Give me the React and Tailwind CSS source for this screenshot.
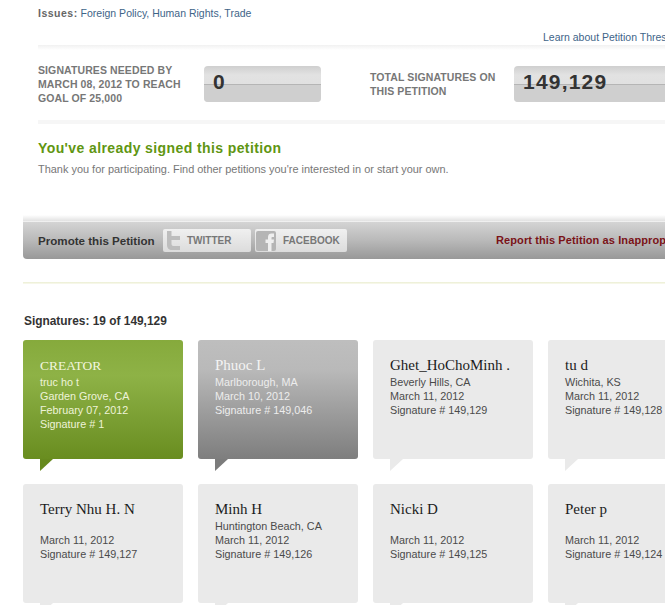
import React from 'react';

const signers = [
  { title: 'CREATOR', lines: ['truc ho t', 'Garden Grove, CA', 'February 07, 2012', 'Signature # 1'], kind: 'creator' },
  { title: 'Phuoc L', lines: ['Marlborough, MA', 'March 10, 2012', 'Signature # 149,046'], kind: 'recent' },
  { title: 'Ghet_HoChoMinh .', lines: ['Beverly Hills, CA', 'March 11, 2012', 'Signature # 149,129'] },
  { title: 'tu d', lines: ['Wichita, KS', 'March 11, 2012', 'Signature # 149,128'] },
  { title: 'Terry Nhu H. N', lines: ['\u00a0', 'March 11, 2012', 'Signature # 149,127'] },
  { title: 'Minh H', lines: ['Huntington Beach, CA', 'March 11, 2012', 'Signature # 149,126'] },
  { title: 'Nicki D', lines: ['\u00a0', 'March 11, 2012', 'Signature # 149,125'] },
  { title: 'Peter p', lines: ['\u00a0', 'March 11, 2012', 'Signature # 149,124'] },
];

const cardStyles = {
  creator: {
    box: 'bg-gradient-to-b from-[#86aa3c] via-[#8eb246] via-30% to-[#698d1f]',
    title: 'text-[13.5px] text-[#f2f6de]',
    text: 'text-[#eef3d8]',
    tail: 'bg-[#678a1e]',
  },
  recent: {
    box: 'bg-gradient-to-b from-[#bebebe] via-[#b9b9b9] via-25% to-[#7e7e7e]',
    title: 'text-[15px] text-[#f4f4f4]',
    text: 'text-[#ededed]',
    tail: 'bg-[#7c7c7c]',
  },
  plain: {
    box: 'bg-[#eaeaea]',
    title: 'text-[15px] text-[#1c1c1c]',
    text: 'text-[#4a4a4a]',
    tail: 'bg-[#eaeaea]',
  },
};

function SignatureCard({ signer }) {
  const s = cardStyles[signer.kind || 'plain'];
  return (
    <div className={`relative w-[160px] h-[119px] rounded-[3px] pl-[17px] pt-[16px] ${s.box}`}>
      <div className={`font-['Liberation_Serif',serif] leading-[19px] ${s.title}`}>{signer.title}</div>
      <div className={`text-[10.8px] leading-[14px] ${s.text}`}>
        {signer.lines.map((line, i) => (
          <div key={i} className="whitespace-nowrap">{line}</div>
        ))}
      </div>
      <div className={`absolute left-[17px] top-full w-[13px] h-[12px] [clip-path:polygon(0_0,100%_0,0_100%)] ${s.tail}`} />
    </div>
  );
}

function Counter({ value, className }) {
  return (
    <div className={`relative shrink-0 h-[36px] rounded-[4px] bg-gradient-to-b from-[#cfcfcf] via-[#e2e2e2] via-25% to-[#dedede] overflow-hidden ${className}`}>
      <div className="absolute inset-x-0 top-[18px] bottom-0 bg-[#cfcfcf] border-t border-[#b5b5b5]" />
      <div className="relative text-[21px] leading-[32px] font-bold text-[#333] tracking-[1.2px]">{value}</div>
    </div>
  );
}

function ShareButton({ icon, label, className }) {
  return (
    <div className={`flex items-center shrink-0 h-[23px] rounded-[2px] bg-gradient-to-b from-[#f0f0f0] to-[#dcdcdc] ${className}`}>
      {icon}
      <span className="text-[10px] font-bold text-[#777]">{label}</span>
    </div>
  );
}

export default function App() {
  return (
    <div className="relative w-[665px] h-[605px] overflow-hidden bg-white font-['Liberation_Sans',Arial,sans-serif]">
      <div className="pl-[38px]">
        <p className="pt-[7px] text-[10.5px] leading-[13px] text-[#3e6488] whitespace-nowrap">
          <span className="font-bold text-[#666] tracking-[0.5px]">Issues:</span> Foreign Policy, Human Rights, Trade
        </p>
        <p className="mt-[11px] pl-[505px] text-[10.5px] leading-[13px] text-[#3e6488] whitespace-nowrap">
          Learn about Petition Thresholds
        </p>
        <div className="mt-[1px] h-[5px] bg-gradient-to-b from-[#f1f1f1] to-white" />

        <div className="flex items-center h-[70px] pb-[2px]">
          <div className="w-[166px] shrink-0 text-[10.5px] leading-[14px] font-bold text-[#777] tracking-[0.1px] whitespace-nowrap">
            SIGNATURES NEEDED BY<br />MARCH 08, 2012 TO REACH<br />GOAL OF 25,000
          </div>
          <Counter value="0" className="w-[117px] pl-[9px]" />
          <div className="w-[144px] shrink-0 pl-[49px] box-content text-[10.5px] leading-[14px] font-bold text-[#777] tracking-[0.1px] whitespace-nowrap">
            TOTAL SIGNATURES ON<br />THIS PETITION
          </div>
          <Counter value="149,129" className="w-[160px] pl-[9px]" />
        </div>
        <div className="h-[4px] bg-[#f6f6f6]" />

        <h2 className="mt-[15px] text-[14px] leading-[18px] font-bold text-[#5f9612] tracking-[0.4px] whitespace-nowrap">
          You've already signed this petition
        </h2>
        <p className="mt-[5px] text-[10.95px] leading-[14px] text-[#777] whitespace-nowrap">
          Thank you for participating. Find other petitions you're interested in or start your own.
        </p>
      </div>

      <div className="pl-[23px]">
        <div className="mt-[39px] h-[6px] bg-gradient-to-b from-white to-[#e2e2e2]" />
        <div className="flex items-center h-[38px] rounded-bl-[4px] border-t border-[#f0f0f0] bg-gradient-to-b from-[#d4d4d4] via-[#b9b9b9] to-[#989898] pl-[15px] whitespace-nowrap">
          <span className="w-[125px] shrink-0 text-[11.6px] font-bold text-[#333]">Promote this Petition</span>
          <ShareButton
            className="w-[88px] mr-[4px]"
            label="TWITTER"
            icon={
              <svg width="24" height="21" viewBox="0 0 24 21">
                <path d="M4 1h4.500v5H17v4H8.500v4c0 1.500 1 2 2.500 2H17v4h-8C6 20 4 18 4 15z" fill="#bdbdbd" />
              </svg>
            }
          />
          <ShareButton
            className="w-[92px]"
            label="FACEBOOK"
            icon={
              <svg width="28" height="21" viewBox="0 0 28 21">
                <rect x="1" y="1" width="20" height="20" rx="2" fill="#b5b5b5" />
                <path d="M13 21v-8h-2.500V9.500H13V7c0-2.500 1.500-3.500 3.500-3.500H19V7h-1.500c-.8 0-1 .4-1 1v1.500H19l-.5 3.500h-2v8z" fill="#efefef" />
              </svg>
            }
          />
          <span className="ml-[149px] shrink-0 text-[11px] font-bold tracking-[0.1px] text-[#7a1218]">
            Report this Petition as Inappropriate
          </span>
        </div>
        <div className="mt-[23px] h-[2px] bg-gradient-to-b from-[#ebeed2] to-[#fafaf0]" />

        <h3 className="mt-[30px] pl-[1px] text-[11.9px] leading-[14px] font-bold text-[#333]">
          Signatures: 19 of 149,129
        </h3>

        <div className="mt-[12px] grid grid-cols-[160px_160px_160px_160px] gap-x-[15px] gap-y-[25px] w-[700px]">
          {signers.map((signer) => (
            <SignatureCard key={signer.title} signer={signer} />
          ))}
        </div>
      </div>
    </div>
  );
}
